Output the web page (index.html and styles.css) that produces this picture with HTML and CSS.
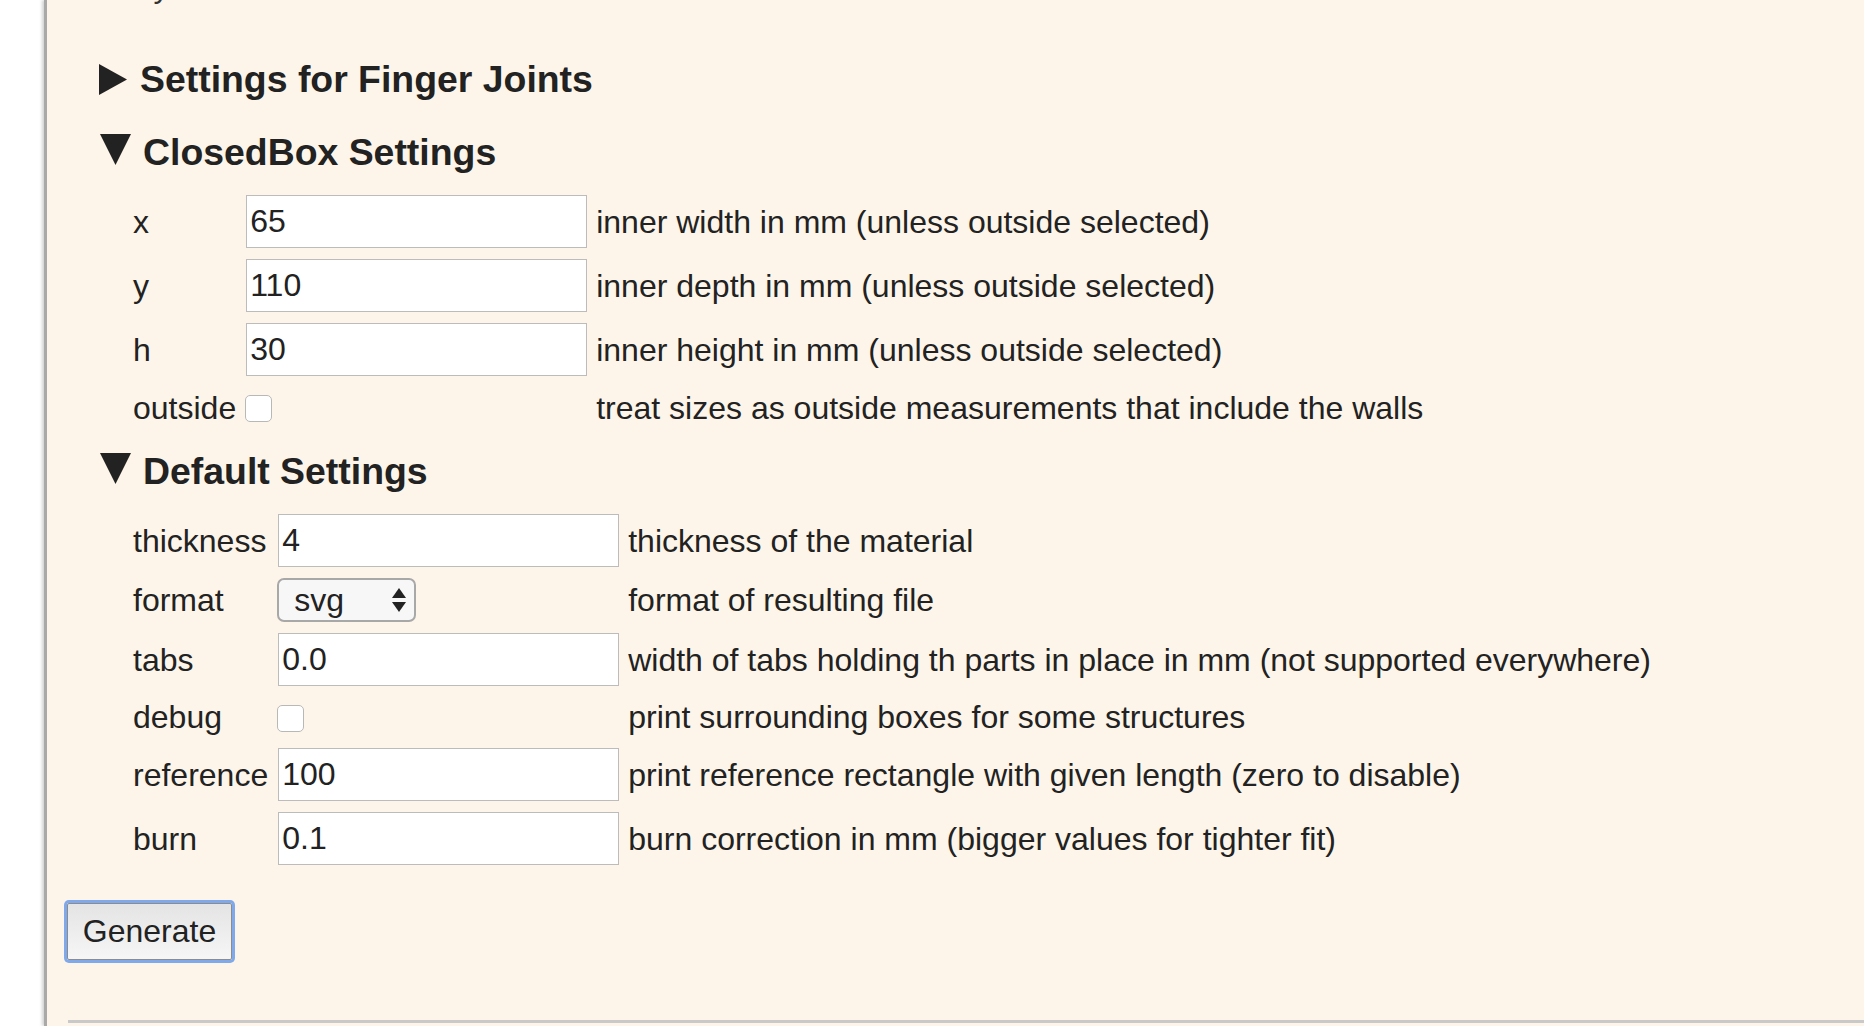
FILE: index.html
```html
<!DOCTYPE html>
<html lang="en">
<head>
<meta charset="utf-8">
<title>ClosedBox</title>
<link rel="stylesheet" href="styles.css">
</head>
<body>
<div class="page">
  <div class="gutter"></div>
  <main class="panel">
    <p class="intro">Fully closed box</p>
    <form class="form">
      <section class="group">
        <h3 class="summary"><svg class="tri tri-right" viewBox="0 0 28 31"><polygon points="0,0 28,15.5 0,31"/></svg>Settings for Finger Joints</h3>
      </section>
      <section class="group">
        <h3 class="summary summary-open"><svg class="tri tri-down" viewBox="0 0 31 31"><polygon points="0,0 31,0 15.5,31"/></svg>ClosedBox Settings</h3>
        <div class="params params-box">
          <label class="lbl" for="x">x</label>
          <input class="field" id="x" type="text" value="65">
          <span class="help">inner width in mm (unless outside selected)</span>

          <label class="lbl" for="y">y</label>
          <input class="field" id="y" type="text" value="110">
          <span class="help">inner depth in mm (unless outside selected)</span>

          <label class="lbl" for="h">h</label>
          <input class="field" id="h" type="text" value="30">
          <span class="help">inner height in mm (unless outside selected)</span>

          <label class="lbl" for="outside">outside</label>
          <span class="cell-check"><input class="check" id="outside" type="checkbox"></span>
          <span class="help">treat sizes as outside measurements that include the walls</span>
        </div>
      </section>
      <section class="group">
        <h3 class="summary summary-open summary-default"><svg class="tri tri-down" viewBox="0 0 31 31"><polygon points="0,0 31,0 15.5,31"/></svg>Default Settings</h3>
        <div class="params params-default">
          <label class="lbl" for="thickness">thickness</label>
          <input class="field" id="thickness" type="text" value="4">
          <span class="help">thickness of the material</span>

          <label class="lbl" for="format">format</label>
          <span class="select-wrap">
            <select class="select" id="format"><option>svg</option></select>
            <svg class="arrows" viewBox="0 0 14 24"><polygon points="7,0 14,10 0,10"/><polygon points="0,14 14,14 7,24"/></svg>
          </span>
          <span class="help">format of resulting file</span>

          <label class="lbl" for="tabs">tabs</label>
          <input class="field" id="tabs" type="text" value="0.0">
          <span class="help">width of tabs holding th parts in place in mm (not supported everywhere)</span>

          <label class="lbl" for="debug">debug</label>
          <span class="cell-check"><input class="check" id="debug" type="checkbox"></span>
          <span class="help">print surrounding boxes for some structures</span>

          <label class="lbl" for="reference">reference</label>
          <input class="field" id="reference" type="text" value="100">
          <span class="help">print reference rectangle with given length (zero to disable)</span>

          <label class="lbl" for="burn">burn</label>
          <input class="field" id="burn" type="text" value="0.1">
          <span class="help">burn correction in mm (bigger values for tighter fit)</span>
        </div>
      </section>
      <div class="actions">
        <button class="btn" type="button">Generate</button>
      </div>
    </form>
    <hr class="rule">
  </main>
</div>
</body>
</html>
```

FILE: styles.css
```css
html, body {
  margin: 0;
  padding: 0;
  background: #ffffff;
  height: 100%;
  overflow: hidden;
}

body {
  font-family: "Liberation Sans", Arial, Helvetica, sans-serif;
  font-size: 32px;
  color: #222222;
}

.page {
  display: flex;
  min-height: 1026px;
}

.gutter {
  width: 44px;
  flex: 0 0 44px;
  background: #ffffff;
}

.panel {
  flex: 1 1 auto;
  background: #fdf5e9;
  border-left: 3px solid #a9a9a9;
  box-shadow: -2px 0 3px rgba(0, 0, 0, 0.18);
  padding-left: 18px;
  display: flex;
  flex-direction: column;
}

.intro {
  margin: -34px 0 0 37px;
  line-height: 40px;
  height: 40px;
  color: #333333;
}

.form {
  display: flex;
  flex-direction: column;
}

.group {
  padding-left: 35px;
  display: flex;
  flex-direction: column;
}

.summary {
  margin: 29px 0 0 0;
  font-size: 37.4px;
  font-weight: bold;
  line-height: 44px;
  height: 44px;
  display: flex;
  align-items: center;
  color: #222222;
}

.group:first-child .summary {
  margin-top: 51px;
}

.summary-default {
  margin-top: 21px;
}

.tri {
  fill: #222222;
  flex: 0 0 auto;
}

.tri-right {
  width: 28px;
  height: 31px;
  margin: 0 13px 0 -1px;
}

.tri-down {
  width: 31px;
  height: 31px;
  margin: -5px 12px 0 0;
}

.params {
  margin: 21px 0 0 33px;
  display: grid;
  grid-template-columns: max-content 341px max-content;
  column-gap: 10px;
  row-gap: 11px;
  align-items: center;
}

.params-box {
  grid-template-rows: 53px 53px 53px 41px;
}

.params-default {
  grid-template-rows: 53px 44px 53px 40px 53px 53px;
}

.lbl, .help {
  line-height: 40px;
  white-space: nowrap;
}

.help {
  margin-left: -1px;
}

.field {
  box-sizing: border-box;
  width: 341px;
  height: 53px;
  margin: 0;
  padding: 0 3px;
  border: 1px solid #bcbcbc;
  background: #ffffff;
  font-family: "Liberation Sans", Arial, Helvetica, sans-serif;
  font-size: 32px;
  color: #222222;
  outline: none;
}

.cell-check {
  display: flex;
  align-items: center;
  margin-left: -1px;
}

.check {
  -webkit-appearance: none;
  appearance: none;
  box-sizing: border-box;
  width: 27px;
  height: 27px;
  margin: 2px 0 0 0;
  border: 1.5px solid #b8b8b8;
  border-radius: 5px;
  background: #ffffff;
}

.select-wrap {
  position: relative;
  display: flex;
  align-items: center;
  width: 139px;
  margin-left: -1px;
}

.select {
  -webkit-appearance: none;
  appearance: none;
  box-sizing: border-box;
  width: 139px;
  height: 44px;
  margin: 0;
  padding: 0 0 0 15px;
  border: 2px solid #a8a8a8;
  border-radius: 7px;
  background: #f7f7f7;
  font-family: "Liberation Sans", Arial, Helvetica, sans-serif;
  font-size: 32px;
  color: #222222;
  outline: none;
}

.arrows {
  position: absolute;
  right: 10px;
  top: 10px;
  width: 14px;
  height: 24px;
  fill: #222222;
  pointer-events: none;
}

.actions {
  margin-top: 37px;
  display: flex;
}

.btn {
  box-sizing: border-box;
  height: 57px;
  width: 165px;
  margin: 1px 0 0 2px;
  padding: 0;
  border: 1px solid #8c8c8c;
  border-radius: 2px;
  background: linear-gradient(#e4e4e4, #f6f6f6);
  box-shadow: 0 0 0 3px #7fa9ea;
  font-family: "Liberation Sans", Arial, Helvetica, sans-serif;
  font-size: 32px;
  color: #222222;
}

.rule {
  margin: 60px 0 0 3px;
  border: 0;
  border-top: 3px solid #c9c9c9;
  height: 0;
}
```
